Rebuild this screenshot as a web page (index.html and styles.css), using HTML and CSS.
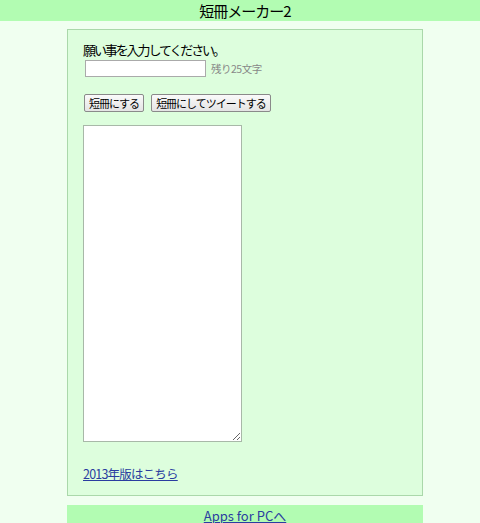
FILE: index.html
```html
<!DOCTYPE html>
<html lang="ja">
<head>
<meta charset="utf-8">
<title>短冊メーカー2</title>
<link rel="stylesheet" href="styles.css">
</head>
<body>
<header class="site-header"><h1 class="site-title">短冊メーカー2</h1></header>
<main class="panel">
  <p class="prompt">願い事を入力してください。</p>
  <div class="input-row">
    <input class="wish-input" type="text">
    <span class="counter">残り25文字</span>
  </div>
  <div class="button-row">
    <button class="btn" type="button">短冊にする</button>
    <button class="btn" type="button">短冊にしてツイートする</button>
  </div>
  <textarea class="preview"></textarea>
  <a class="old-link" href="#">2013年版はこちら</a>
</main>
<footer class="site-footer"><a class="footer-link" href="#">Apps for PCへ</a></footer>
</body>
</html>
```

FILE: styles.css
```css
html, body {
  margin: 0;
  padding: 0;
  background: #f0fff0;
  font-family: "Noto Sans CJK JP", "Noto Sans", sans-serif;
  color: #000;
}
.site-header {
  height: 21px;
  background: #b2fcb2;
  text-align: center;
  padding-left: 10px;
}
.site-title {
  margin: 0;
  font-size: 15px;
  font-weight: normal;
  line-height: 21px;
  letter-spacing: -1px;
}
.panel {
  box-sizing: border-box;
  width: 356px;
  height: 467px;
  margin: 8px 0 0 67px;
  border: 1px solid #aad8aa;
  background: #ddfedd;
  padding: 12px 15px 0 15px;
  display: flex;
  flex-direction: column;
  align-items: flex-start;
}
.prompt {
  margin: 0;
  font-size: 13px;
  line-height: 16px;
  letter-spacing: -2.1px;
}
.input-row {
  display: flex;
  align-items: center;
  gap: 5px;
  margin: 2px 0 0 2px;
}
.wish-input {
  box-sizing: border-box;
  width: 121px;
  height: 17px;
  border: 1px solid #aaa;
  background: #fff;
  padding: 0;
  margin: 0;
}
.counter {
  font-size: 10.5px;
  color: #888;
  letter-spacing: -0.5px;
}
.button-row {
  display: flex;
  gap: 7px;
  margin: 17px 0 0 1px;
}
.btn {
  box-sizing: border-box;
  height: 18px;
  padding: 0 4px;
  font-family: inherit;
  font-size: 11px;
  letter-spacing: -1px;
  line-height: 16px;
  border: 1px solid #8a8a8a;
  border-radius: 2px;
  background: linear-gradient(#fafafa, #e4e4e4);
  color: #000;
}
.preview {
  box-sizing: border-box;
  width: 159px;
  height: 317px;
  margin: 13px 0 0 0;
  border: 1px solid #a8b8a8;
  background: #fff;
  padding: 0;
}
.old-link {
  margin-top: 22px;
  font-size: 12.5px;
  letter-spacing: -0.8px;
  color: #2a3da0;
}
.site-footer {
  box-sizing: border-box;
  width: 356px;
  height: 20px;
  margin: 9px 0 0 67px;
  background: #b2fcb2;
  text-align: center;
  line-height: 18px;
}
.footer-link {
  font-size: 13px;
  color: #2a3da0;
}
```
